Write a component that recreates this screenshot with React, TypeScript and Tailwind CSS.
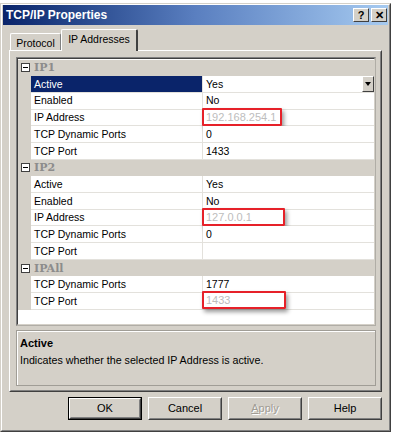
import React from 'react';

type Row = { name: string; value: string; selected?: boolean; box?: number; dropdown?: boolean };
type Section = { title: string; rows: Row[] };

const sections: Section[] = [
    {
        title: 'IP1',
        rows: [
            { name: 'Active', value: 'Yes', selected: true, dropdown: true },
            { name: 'Enabled', value: 'No' },
            { name: 'IP Address', value: '192.168.254.1', box: 80 },
            { name: 'TCP Dynamic Ports', value: '0' },
            { name: 'TCP Port', value: '1433' },
        ],
    },
    {
        title: 'IP2',
        rows: [
            { name: 'Active', value: 'Yes' },
            { name: 'Enabled', value: 'No' },
            { name: 'IP Address', value: '127.0.0.1', box: 83 },
            { name: 'TCP Dynamic Ports', value: '0' },
            { name: 'TCP Port', value: '' },
        ],
    },
    {
        title: 'IPAll',
        rows: [
            { name: 'TCP Dynamic Ports', value: '1777' },
            { name: 'TCP Port', value: '1433', box: 84 },
        ],
    },
];

const MinusBox = () => (
    <div className="w-[9px] h-[9px] border border-[#404040] bg-white flex items-center justify-center">
        <div className="w-[5px] h-[1px] bg-black" />
    </div>
);

const CaptionButton = ({ children }: { children: React.ReactNode }) => (
    <div className="w-[16px] h-[14px] bg-[#d4d0c8] border border-t-white border-l-white border-r-[#404040] border-b-[#404040] flex items-center justify-center text-[11px] font-bold leading-none text-black">
        {children}
    </div>
);

const DialogButton = ({ label, isDefault, disabled }: { label: React.ReactNode; isDefault?: boolean; disabled?: boolean }) => (
    <div className={`w-[74px] h-[23px] ${isDefault ? 'border border-black' : ''}`}>
        <div className="h-full border border-t-white border-l-white border-r-[#404040] border-b-[#404040]">
            <div className={`h-full flex items-center justify-center border border-transparent border-r-[#808080] border-b-[#808080] text-[11px] ${disabled ? 'text-[#a09c94] [text-shadow:1px_1px_0_#ffffff]' : 'text-black'}`}>
                {label}
            </div>
        </div>
    </div>
);

const PropertyRow = ({ row }: { row: Row }) => (
    <div className="flex h-[16.7px]">
        <div className="w-[13px] shrink-0 bg-[#d4d0c8]" />
        <div className={`w-[172px] shrink-0 border-b border-r border-[#e3e1dc] pl-[3px] flex items-center ${row.selected ? 'bg-[#0a246a] text-white' : 'bg-white text-black'}`}>
            {row.name}
        </div>
        <div className="relative flex-1 bg-white border-b border-[#e3e1dc] pl-[3px] flex items-center">
            <span className={row.box ? 'text-[#bdbdbd] text-[11px]' : 'text-black'}>{row.value}</span>
            {row.dropdown && (
                <div className="absolute right-0 top-0 w-[12px] h-[16px] bg-[#d4d0c8] border border-t-white border-l-white border-r-[#404040] border-b-[#404040] flex items-center justify-center">
                    <div className="w-0 h-0 border-l-[3.5px] border-r-[3.5px] border-t-[4px] border-l-transparent border-r-transparent border-t-black" />
                </div>
            )}
            {row.box && (
                <div
                    className="absolute left-[-1px] top-[-2px] h-[18px] border-[2.5px] border-[#e62129] rounded-[1px] shadow-[2px_3px_4px_rgba(0,0,0,0.4)]"
                    style={{ width: row.box }}
                />
            )}
        </div>
    </div>
);

export default function App() {
    return (
        <div className="w-[394px] h-[434px] bg-white overflow-hidden text-[10.5px] leading-none" style={{ fontFamily: '"Liberation Sans", Arial, sans-serif' }}>
            <div className="h-[3px]" />
            <div className="w-[391px] h-[429px] bg-[#d4d0c8] border border-t-[#d4d0c8] border-l-[#d4d0c8] border-r-[#404040] border-b-[#404040]">
                <div className="h-full flex flex-col border border-t-white border-l-white border-r-[#808080] border-b-[#808080]">
                    <div className="h-[20px] mx-[1px] bg-gradient-to-r from-[#0a246a] via-[#5a7fc0] to-[#a6caf0] flex items-center justify-between pl-[3px] pr-[1px]">
                        <span className="text-white font-bold text-[12px]">TCP/IP Properties</span>
                        <div className="flex gap-[2px]">
                            <CaptionButton>?</CaptionButton>
                            <CaptionButton>✕</CaptionButton>
                        </div>
                    </div>

                    <div className="mt-[4px] ml-[8px] h-[21px] flex items-end relative z-10">
                        <div className="w-[51px] h-[17px] border-l border-t border-white border-r border-r-[#808080] rounded-t-[2px] flex items-center justify-center pt-[2px]">
                            Protocol
                        </div>
                        <div className="w-[77px] h-[22px] mb-[-1px] bg-[#d4d0c8] border-l border-t border-white border-r-2 border-r-[#404040] rounded-t-[2px] flex items-center justify-center pb-[2px]">
                            IP Addresses
                        </div>
                    </div>

                    <div className="ml-[7px] w-[373px] h-[342px] border border-t-white border-l-white border-r-[#404040] border-b-[#404040]">
                        <div className="h-full border border-transparent border-r-[#808080] border-b-[#808080] pl-[5px] pt-[5px]">
                            <div className="w-[360px] h-[269px] border border-t-[#808080] border-l-[#808080] border-r-[#b0ada6] border-b-[#b0ada6] bg-white">
                                <div className="h-full border border-t-[#404040] border-l-[#404040] border-r-[#d4d0c8] border-b-[#d4d0c8] bg-white pt-[0.5px]">
                                    {sections.map(section => (
                                        <div key={section.title}>
                                            <div className="flex items-center h-[16.7px] bg-[#d4d0c8]">
                                                <div className="w-[13px] flex justify-center pl-[1px]">
                                                    <MinusBox />
                                                </div>
                                                <span className="pl-[3px] font-bold text-[#8c8c8c] text-[11px]" style={{ fontFamily: '"DejaVu Serif", serif' }}>
                                                    {section.title}
                                                </span>
                                            </div>
                                            {section.rows.map((row, i) => (
                                                <PropertyRow key={i} row={row} />
                                            ))}
                                        </div>
                                    ))}
                                </div>
                            </div>

                            <div className="mt-[4px] w-[360px] h-[56px] border border-[#a09d96] shadow-[inset_1px_1px_0_#ffffff] px-[3px] pt-[7px]">
                                <div className="font-bold text-[11px]">Active</div>
                                <div className="mt-[6px] text-[10.7px]">Indicates whether the selected IP Address is active.</div>
                            </div>
                        </div>
                    </div>

                    <div className="mt-[5px] flex justify-end gap-[6px] pr-[7px]">
                        <DialogButton label="OK" isDefault />
                        <DialogButton label="Cancel" />
                        <DialogButton label={<span><span className="underline">A</span>pply</span>} disabled />
                        <DialogButton label="Help" />
                    </div>
                </div>
            </div>
        </div>
    );
}
